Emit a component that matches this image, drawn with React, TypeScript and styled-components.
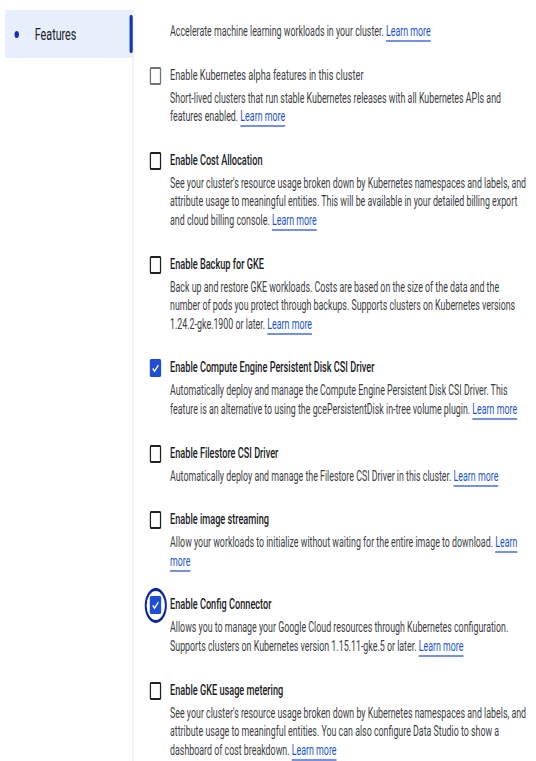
import * as React from 'react'
import styled, { createGlobalStyle, css } from 'styled-components'

// the capture is squeezed sideways, so the page is laid out wide and scaled back
const SQUEEZE = 0.632

const GlobalStyle = createGlobalStyle`
    html, body {
        margin: 0;
        padding: 0;
        background: #ffffff;
    }
    body {
        font-family: Roboto, "Noto Sans", "Liberation Sans", sans-serif;
        color: #202124;
        overflow: hidden;
    }
`

const Stage = styled.div<{ $squeeze: number }>`
    width: ${(p) => 536 / p.$squeeze}px;
    transform: scaleX(${(p) => p.$squeeze});
    transform-origin: 0 0;
`

const Layout = styled.div`
    display: flex;
    padding: 10px 0 0 8px;
    min-height: 761px;
    box-sizing: border-box;
`

const Sidebar = styled.nav`
    width: 202px;
    flex-shrink: 0;
    border-right: 1px solid #dadce0;
`

const NavItem = styled.div`
    display: flex;
    align-items: center;
    height: 48px;
    background: #e8effc;
`

const NavDot = styled.span`
    width: 7px;
    height: 7px;
    border-radius: 50%;
    background: #0b2fc0;
    margin: 0 25px 0 15px;
`

const NavLabel = styled.span`
    flex: 1;
    font-size: 17px;
    color: #202124;
`

const NavBar = styled.span`
    width: 5px;
    height: 38px;
    border-radius: 2px;
    background: #0f36c4;
`

const Content = styled.main`
    flex: 1;
    padding: 12px 11px 0 26px;
`

const Option = styled.div`
    display: grid;
    grid-template-columns: 18px 1fr;
    column-gap: 14px;
    margin-bottom: 25px;
`

const Box = styled.span<{ $checked?: boolean; $disabled?: boolean; $focused?: boolean }>`
    position: relative;
    width: 18px;
    height: 18px;
    margin-top: 1px;
    box-sizing: border-box;
    border: 2px solid ${(p) => (p.$disabled ? '#6f7377' : '#202124')};
    border-radius: 2px;
    display: flex;
    align-items: center;
    justify-content: center;
    ${(p) =>
        p.$checked &&
        css`
            background: #1c4fd6;
            border-color: #1c4fd6;
        `}
    ${(p) =>
        p.$focused &&
        css`
            &::before {
                content: '';
                position: absolute;
                left: 50%;
                top: 50%;
                width: 35px;
                height: 35px;
                margin: -17.5px 0 0 -17.5px;
                border: 3px solid #0a22a6;
                border-radius: 50%;
                box-sizing: border-box;
            }
        `}
`

const Title = styled.div<{ $disabled?: boolean }>`
    font-size: 14.5px;
    line-height: 20px;
    font-weight: ${(p) => (p.$disabled ? 400 : 500)};
    color: ${(p) => (p.$disabled ? '#3c4043' : '#202124')};
`

const Desc = styled.p<{ $lead?: boolean }>`
    grid-column: 2;
    margin: ${(p) => (p.$lead ? '0' : '3px 0 0')};
    font-size: 14px;
    line-height: 18.6px;
    color: #3c4043;
`

const Link = styled.a`
    color: #1a55d6;
    text-decoration: underline;
    text-decoration-color: #7591e6;
    text-decoration-thickness: 1.5px;
    text-underline-offset: 4px;
    cursor: pointer;
`

const Check = () => (
    <svg width="14" height="14" viewBox="0 0 24 24">
        <path d="M4.5 12.5l5 5L20 7" fill="none" stroke="#ffffff" strokeWidth="3" />
    </svg>
)

type Feature = {
    title: string
    desc: string
    checked?: boolean
    disabled?: boolean
    focused?: boolean
}

const features: Feature[] = [
    {
        title: 'Enable Kubernetes alpha features in this cluster',
        desc: 'Short-lived clusters that run stable Kubernetes releases with all Kubernetes APIs and features enabled.',
        disabled: true,
    },
    {
        title: 'Enable Cost Allocation',
        desc: "See your cluster's resource usage broken down by Kubernetes namespaces and labels, and attribute usage to meaningful entities. This will be available in your detailed billing export and cloud billing console.",
    },
    {
        title: 'Enable Backup for GKE',
        desc: 'Back up and restore GKE workloads. Costs are based on the size of the data and the number of pods you protect through backups. Supports clusters on Kubernetes versions 1.24.2-gke.1900 or later.',
    },
    {
        title: 'Enable Compute Engine Persistent Disk CSI Driver',
        desc: 'Automatically deploy and manage the Compute Engine Persistent Disk CSI Driver. This feature is an alternative to using the gcePersistentDisk in-tree volume plugin.',
        checked: true,
    },
    {
        title: 'Enable Filestore CSI Driver',
        desc: 'Automatically deploy and manage the Filestore CSI Driver in this cluster.',
    },
    {
        title: 'Enable image streaming',
        desc: 'Allow your workloads to initialize without waiting for the entire image to download.',
    },
    {
        title: 'Enable Config Connector',
        desc: 'Allows you to manage your Google Cloud resources through Kubernetes configuration. Supports clusters on Kubernetes version 1.15.11-gke.5 or later.',
        checked: true,
        focused: true,
    },
    {
        title: 'Enable GKE usage metering',
        desc: "See your cluster's resource usage broken down by Kubernetes namespaces and labels, and attribute usage to meaningful entities. You can also configure Data Studio to show a dashboard of cost breakdown.",
    },
]

export default function App() {
    return (
        <>
            <GlobalStyle />
            <Stage $squeeze={SQUEEZE}>
                <Layout>
                    <Sidebar>
                        <NavItem>
                            <NavDot />
                            <NavLabel>Features</NavLabel>
                            <NavBar />
                        </NavItem>
                    </Sidebar>
                    <Content>
                        <Option>
                            <Desc $lead>
                                Accelerate machine learning workloads in your cluster. <Link>Learn more</Link>
                            </Desc>
                        </Option>
                        {features.map((f) => (
                            <Option key={f.title}>
                                <Box $checked={f.checked} $disabled={f.disabled} $focused={f.focused}>
                                    {f.checked && <Check />}
                                </Box>
                                <Title $disabled={f.disabled}>{f.title}</Title>
                                <Desc>
                                    {f.desc} <Link>Learn more</Link>
                                </Desc>
                            </Option>
                        ))}
                    </Content>
                </Layout>
            </Stage>
        </>
    )
}
